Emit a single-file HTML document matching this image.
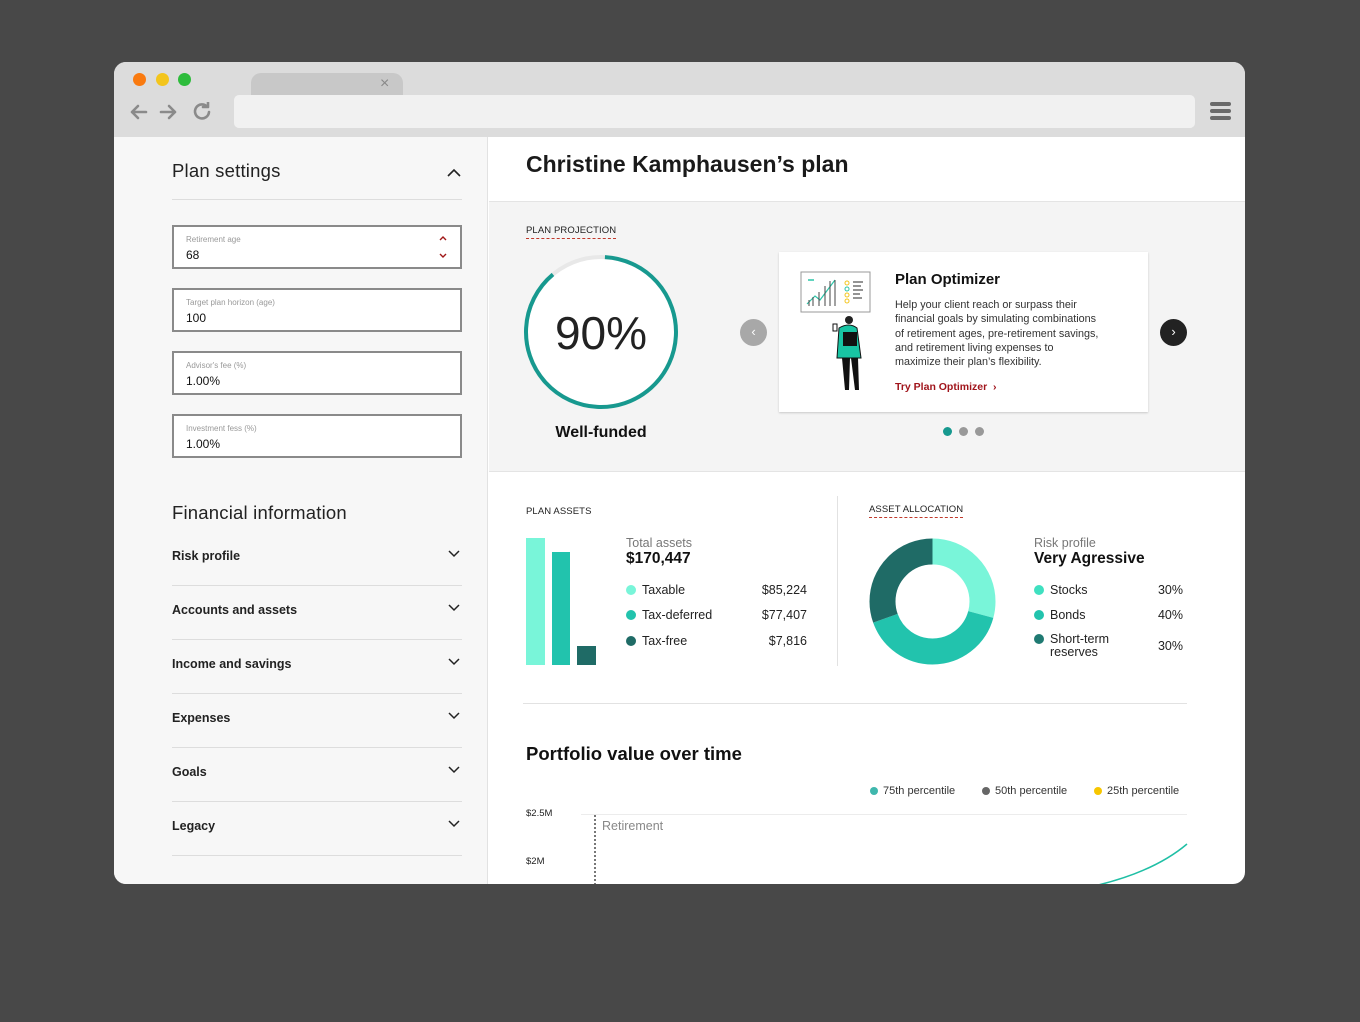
<!DOCTYPE html>
<html><head><meta charset="utf-8"><style>
*{margin:0;padding:0;box-sizing:border-box}
body{width:1360px;height:1022px;background:#484848;font-family:"Liberation Sans",sans-serif;position:relative;overflow:hidden;color:#222}
.a{position:absolute}
.win{left:114px;top:62px;width:1131px;height:822px;border-radius:12px;overflow:hidden;background:#fff}
.bar{left:0;top:0;width:1131px;height:75px;background:#dcdcdc}
.side{left:0;top:75px;width:374px;height:747px;background:#f7f7f7;border-right:1px solid #e2e2e2}
.fld{left:58px;width:290px;height:44px;border:2px solid #8a8a8a;background:#fff}
.fld .l{position:absolute;left:12px;top:8px;font-size:8px;color:#999}
.fld .v{position:absolute;left:12px;top:21px;font-size:12px;color:#111}
.acc{left:58px;width:290px;height:54px;border-bottom:1px solid #ddd;font-size:12.5px;font-weight:bold}
.acc span{position:absolute;left:0;top:17px}
.chev{position:absolute;right:2px;top:18px;width:12px;height:8px}
.cap{font-size:9.5px;color:#222;letter-spacing:.1px}
.dash{border-bottom:1.5px dashed #c0392b;padding-bottom:2px}
.dot{display:inline-block;width:10px;height:10px;border-radius:50%;vertical-align:-1px;margin-right:6px}
.row{font-size:12.5px;color:#222}
.h{font-size:18.5px;color:#222;font-weight:300;letter-spacing:.2px}
</style></head><body>
<div class="a win">
 <div class="a bar">
  <div class="a" style="left:19px;top:11px;width:13px;height:13px;border-radius:50%;background:#f97a10"></div>
  <div class="a" style="left:42px;top:11px;width:13px;height:13px;border-radius:50%;background:#f3c51d"></div>
  <div class="a" style="left:64px;top:11px;width:13px;height:13px;border-radius:50%;background:#2ebc3c"></div>
  <div class="a" style="left:137px;top:11px;width:152px;height:22px;background:#c8c8c8;border-radius:10px 10px 0 0"></div>
  <div class="a" style="left:266px;top:13px;font-size:16px;color:#888">×</div>
  <svg class="a" style="left:16px;top:40px" width="90" height="20" viewBox="0 0 90 20" fill="none" stroke="#8a8a8a" stroke-width="2.6" stroke-linecap="round" stroke-linejoin="round">
   <path d="M16 10H2M8 4 2 10l6 6"/><path d="M31 10h14M39 4l6 6-6 6"/>
   <path d="M77 4.5A7 7 0 1 0 79 10"/><path d="M73 5h5V0"/>
  </svg>
  <div class="a" style="left:120px;top:33px;width:961px;height:33px;background:#f1f1f1;border-radius:5px"></div>
  <div class="a" style="left:1096px;top:40px;width:21px;height:4px;border-radius:2px;background:#6a6a6a"></div>
  <div class="a" style="left:1096px;top:47px;width:21px;height:4px;border-radius:2px;background:#6a6a6a"></div>
  <div class="a" style="left:1096px;top:54px;width:21px;height:4px;border-radius:2px;background:#6a6a6a"></div>
 </div>
 <div class="a side">
  <div class="a h" style="left:58px;top:23px">Plan settings</div>
  <svg class="a" style="left:333px;top:31px" width="14" height="9" viewBox="0 0 14 9"><path d="M1 8l6-6 6 6" fill="none" stroke="#222" stroke-width="1.6"/></svg>
  <div class="a" style="left:58px;top:62px;width:290px;height:1px;background:#ddd"></div>
  <div class="a fld" style="top:88px"><div class="l">Retirement age</div><div class="v">68</div>
   <svg style="position:absolute;right:12px;top:7px" width="10" height="26" viewBox="0 0 10 26" fill="none" stroke="#a01818" stroke-width="1.4"><path d="M2 6l3-3 3 3M2 20l3 3 3-3"/></svg></div>
  <div class="a fld" style="top:151px"><div class="l">Target plan horizon (age)</div><div class="v">100</div></div>
  <div class="a fld" style="top:214px"><div class="l">Advisor's fee (%)</div><div class="v">1.00%</div></div>
  <div class="a fld" style="top:277px"><div class="l">Investment fess (%)</div><div class="v">1.00%</div></div>
  <div class="a h" style="left:58px;top:365px">Financial information</div>
  <div class="a acc" style="top:395px"><span>Risk profile</span><svg class="chev" viewBox="0 0 12 8"><path d="M1 1l5 5 5-5" fill="none" stroke="#222" stroke-width="1.5"/></svg></div>
  <div class="a acc" style="top:449px"><span>Accounts and assets</span><svg class="chev" viewBox="0 0 12 8"><path d="M1 1l5 5 5-5" fill="none" stroke="#222" stroke-width="1.5"/></svg></div>
  <div class="a acc" style="top:503px"><span>Income and savings</span><svg class="chev" viewBox="0 0 12 8"><path d="M1 1l5 5 5-5" fill="none" stroke="#222" stroke-width="1.5"/></svg></div>
  <div class="a acc" style="top:557px"><span>Expenses</span><svg class="chev" viewBox="0 0 12 8"><path d="M1 1l5 5 5-5" fill="none" stroke="#222" stroke-width="1.5"/></svg></div>
  <div class="a acc" style="top:611px"><span>Goals</span><svg class="chev" viewBox="0 0 12 8"><path d="M1 1l5 5 5-5" fill="none" stroke="#222" stroke-width="1.5"/></svg></div>
  <div class="a acc" style="top:665px"><span>Legacy</span><svg class="chev" viewBox="0 0 12 8"><path d="M1 1l5 5 5-5" fill="none" stroke="#222" stroke-width="1.5"/></svg></div>
 </div>
 <div class="a" style="left:412px;top:89px;font-size:23px;font-weight:bold;color:#1a1a1a">Christine Kamphausen’s plan</div>
 <div class="a" style="left:375px;top:139px;width:756px;height:271px;background:#f4f4f4;border-top:1px solid #e4e4e4;border-bottom:1px solid #e4e4e4"></div>
 <div class="a cap" style="left:412px;top:163px"><span class="dash">PLAN PROJECTION</span></div>
 <svg class="a" style="left:408px;top:191px" width="158" height="158" viewBox="0 0 158 158">
  <circle cx="79" cy="79" r="75" fill="#fff"/>
  <circle cx="79" cy="79" r="75" fill="none" stroke="#e8e8e8" stroke-width="4"/>
  <circle cx="79" cy="79" r="75" fill="none" stroke="#17998f" stroke-width="4" stroke-dasharray="415 471" transform="rotate(-87 79 79)"/>
 </svg>
 <div class="a" style="left:408px;top:244px;width:158px;text-align:center;font-size:46px;color:#222">90%</div>
 <div class="a" style="left:408px;top:362px;width:158px;text-align:center;font-size:16px;font-weight:bold;color:#111">Well-funded</div>
 <div class="a" style="left:626px;top:257px;width:27px;height:27px;border-radius:50%;background:#a8a8a8;color:#fff;font-size:13px;text-align:center;line-height:26px">‹</div>
 <div class="a" style="left:1046px;top:257px;width:27px;height:27px;border-radius:50%;background:#222;color:#fff;font-size:13px;text-align:center;line-height:26px">›</div>
 <div class="a" style="left:665px;top:190px;width:369px;height:160px;background:#fff;box-shadow:0 1px 2px rgba(0,0,0,.18)">
  <svg style="position:absolute;left:20px;top:18px" width="72" height="125" viewBox="0 0 72 125">
   <rect x="2" y="2" width="69" height="40" fill="#fff" stroke="#999" stroke-width="1"/>
   <path d="M8 34l8-8 5 4 9-12 6-8" fill="none" stroke="#2cc5a8" stroke-width="1.2"/>
   <path d="M10 36v-6M14 36v-9M20 36v-14M26 36v-20M31 36v-25M36 36v-26" stroke="#444" stroke-width="1"/>
   <path d="M9 10h6" stroke="#2cc5a8" stroke-width="1.5"/>
   <circle cx="48" cy="13" r="2" fill="none" stroke="#f3c51d"/><circle cx="48" cy="19" r="2" fill="none" stroke="#2cc5a8"/><circle cx="48" cy="25" r="2" fill="none" stroke="#f3c51d"/><circle cx="48" cy="31" r="2" fill="none" stroke="#f3c51d"/>
   <path d="M54 12h10M54 16h8M54 20h10M54 24h7M54 28h9" stroke="#555" stroke-width="1.2"/>
   <circle cx="50" cy="50" r="4" fill="#222"/>
   <path d="M40 58q10-6 18 0l4 30h-24z" fill="#18c4a3" stroke="#111" stroke-width="1"/>
   <rect x="44" y="62" width="14" height="14" fill="#111"/>
   <path d="M43 88h8l-1 32h-4zM52 88h7l1 32h-4z" fill="#111"/>
   <rect x="34" y="54" width="4" height="7" fill="#fff" stroke="#111"/>
  </svg>
  <div style="position:absolute;left:116px;top:19px;font-size:15px;font-weight:bold;color:#111">Plan Optimizer</div>
  <div style="position:absolute;left:116px;top:46px;white-space:nowrap;font-size:10.8px;line-height:14.3px;color:#333">Help your client reach or surpass their<br>financial goals by simulating combinations<br>of retirement ages, pre-retirement savings,<br>and retirement living expenses to<br>maximize their plan’s flexibility.</div>
  <div style="position:absolute;left:116px;top:129px;font-size:10.5px;font-weight:bold;color:#a0141b">Try Plan Optimizer &nbsp;›</div>
 </div>
 <div class="a" style="left:829px;top:365px;width:9px;height:9px;border-radius:50%;background:#17998f"></div>
 <div class="a" style="left:845px;top:365px;width:9px;height:9px;border-radius:50%;background:#999"></div>
 <div class="a" style="left:861px;top:365px;width:9px;height:9px;border-radius:50%;background:#999"></div>
 <div class="a cap" style="left:412px;top:444px">PLAN ASSETS</div>
 <div class="a" style="left:412px;top:476px;width:19px;height:127px;background:#79f5d9"></div>
 <div class="a" style="left:438px;top:490px;width:18px;height:113px;background:#22c3ad"></div>
 <div class="a" style="left:463px;top:584px;width:19px;height:19px;background:#1f6b66"></div>
 <div class="a" style="left:512px;top:474px;font-size:12.5px;color:#777">Total assets</div>
 <div class="a" style="left:512px;top:488px;font-size:15.5px;font-weight:bold;color:#111">$170,447</div>
 <div class="a row" style="left:512px;top:521px"><span class="dot" style="background:#79f5d9"></span>Taxable</div>
 <div class="a row" style="left:512px;top:546px"><span class="dot" style="background:#22c3ad"></span>Tax-deferred</div>
 <div class="a row" style="left:512px;top:572px"><span class="dot" style="background:#1f6b66"></span>Tax-free</div>
 <div class="a row" style="left:620px;top:521px;width:73px;text-align:right">$85,224</div>
 <div class="a row" style="left:620px;top:546px;width:73px;text-align:right">$77,407</div>
 <div class="a row" style="left:620px;top:572px;width:73px;text-align:right">$7,816</div>
 <div class="a" style="left:723px;top:434px;width:1px;height:170px;background:#e2e2e2"></div>
 <div class="a cap" style="left:755px;top:442px"><span class="dash">ASSET ALLOCATION</span></div>
 <svg class="a" style="left:755px;top:476px" width="127" height="127" viewBox="0 0 127 127">
  <g transform="rotate(-90 63.5 63.5)" fill="none" stroke-width="26">
   <circle cx="63.5" cy="63.5" r="50" stroke="#79f5d9" stroke-dasharray="91.6 314.2"/>
   <circle cx="63.5" cy="63.5" r="50" stroke="#22c3ad" stroke-dasharray="0 91.6 126.5 314.2"/>
   <circle cx="63.5" cy="63.5" r="50" stroke="#1f6b66" stroke-dasharray="0 218.1 96.1 314.2"/>
  </g>
 </svg>
 <div class="a" style="left:920px;top:474px;font-size:12.5px;color:#777">Risk profile</div>
 <div class="a" style="left:920px;top:488px;font-size:15.5px;font-weight:bold;color:#111">Very Agressive</div>
 <div class="a row" style="left:920px;top:521px"><span class="dot" style="background:#3fe0c0"></span>Stocks</div>
 <div class="a row" style="left:920px;top:546px"><span class="dot" style="background:#22c3ad"></span>Bonds</div>
 <div class="a row" style="left:920px;top:571px;line-height:13px"><span class="dot" style="background:#1f7a72"></span>Short-term<br><span style="padding-left:16px">reserves</span></div>
 <div class="a row" style="left:1030px;top:521px;width:39px;text-align:right">30%</div>
 <div class="a row" style="left:1030px;top:546px;width:39px;text-align:right">40%</div>
 <div class="a row" style="left:1030px;top:577px;width:39px;text-align:right">30%</div>
 <div class="a" style="left:409px;top:641px;width:664px;height:1px;background:#e2e2e2"></div>
 <div class="a" style="left:412px;top:681px;font-size:18.5px;font-weight:bold;color:#111">Portfolio value over time</div>
 <div class="a" style="left:756px;top:723px;font-size:11px;color:#333"><span class="dot" style="background:#3fb7ad;width:8px;height:8px;margin-right:5px"></span>75th percentile</div>
 <div class="a" style="left:868px;top:723px;font-size:11px;color:#333"><span class="dot" style="background:#666;width:8px;height:8px;margin-right:5px"></span>50th percentile</div>
 <div class="a" style="left:980px;top:723px;font-size:11px;color:#333"><span class="dot" style="background:#f7c600;width:8px;height:8px;margin-right:5px"></span>25th percentile</div>
 <div class="a" style="left:412px;top:746px;font-size:9.5px;color:#222">$2.5M</div>
 <div class="a" style="left:412px;top:794px;font-size:9.5px;color:#222">$2M</div>
 <div class="a" style="left:467px;top:752px;width:606px;height:1px;background:#ececec"></div>
 <div class="a" style="left:480px;top:753px;width:0;height:70px;border-left:2px dotted #777"></div>
 <div class="a" style="left:488px;top:757px;font-size:12.5px;color:#888">Retirement</div>
 <svg class="a" style="left:980px;top:780px" width="95" height="45" viewBox="0 0 95 45"><path d="M0 44Q60 30 93 2" fill="none" stroke="#1fbfa5" stroke-width="1.5"/></svg>
</div>
</body></html>
